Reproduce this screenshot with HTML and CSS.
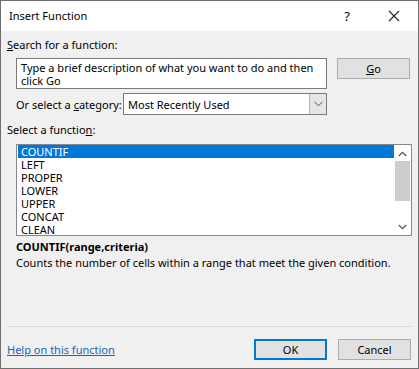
FILE: index.html
```html
<!DOCTYPE html>
<html lang="en">
<head>
  <meta charset="UTF-8">
  <title>Insert Function</title>
  <link rel="stylesheet" href="styles.css">
</head>
<body>

  <div class="dialog">
    <div class="titlebar">
      <span class="title">Insert Function</span>
      <span class="help">?</span>
      <span class="close">
        <svg width="12" height="12" viewBox="0 0 12 12"><path d="M1 1 L11 11 M11 1 L1 11" stroke="#222" stroke-width="1.1" fill="none"/></svg>
      </span>
    </div>

    <div class="content">
      <div class="label"><u>S</u>earch for a function:</div>

      <div class="search-row">
        <div class="search-box">Type a brief description of what you want to do and then click Go</div>
        <button class="btn"><u>G</u>o</button>
      </div>

      <div class="category-row">
        <span class="category-label">Or select a <u>c</u>ategory:</span>
        <div class="select">
          <span class="select-value">Most Recently Used</span>
          <span class="select-arrow">
            <svg width="9" height="6" viewBox="0 0 9 6"><path d="M0.5 0.8 L4.5 4.8 L8.5 0.8" stroke="#555" stroke-width="1" fill="none"/></svg>
          </span>
        </div>
      </div>

      <div class="label fn-label">Select a functio<u>n</u>:</div>

      <div class="listbox">
        <div class="list-items">
          <div class="item selected">COUNTIF</div>
          <div class="item">LEFT</div>
          <div class="item">PROPER</div>
          <div class="item">LOWER</div>
          <div class="item">UPPER</div>
          <div class="item">CONCAT</div>
          <div class="item">CLEAN</div>
        </div>
        <div class="scrollbar">
          <svg width="9" height="6" viewBox="0 0 9 6"><path d="M0.8 5 L4.5 1.3 L8.2 5" stroke="#555" stroke-width="1.3" fill="none"/></svg>
          <div class="thumb"></div>
          <svg width="9" height="6" viewBox="0 0 9 6"><path d="M0.8 1 L4.5 4.7 L8.2 1" stroke="#555" stroke-width="1.3" fill="none"/></svg>
        </div>
      </div>

      <div class="signature">COUNTIF(range,criteria)</div>
      <div class="description">Counts the number of cells within a range that meet the given condition.</div>

      <div class="separator"></div>

      <div class="footer">
        <a href="#" class="link">Help on this function</a>
        <div class="buttons">
          <button class="btn ok-btn">OK</button>
          <button class="btn">Cancel</button>
        </div>
      </div>
    </div>
  </div>

</body>
</html>
```

FILE: styles.css
```css
:root {
  --face: #f0f0f0;
  --border: #7a7a7a;
  --btn-bg: #e1e1e1;
  --btn-border: #adadad;
  --accent: #0078d7;
}

body {
  margin: 0;
  font-family: "Noto Sans", sans-serif;
  font-size: 11px;
  color: #000;
}

.dialog {
  width: 419px;
  height: 369px;
  box-sizing: border-box;
  border: 1px solid #6e6e6e;
  background: var(--face);
  display: flex;
  flex-direction: column;
}

.titlebar {
  height: 30px;
  background: #fff;
  display: flex;
  align-items: center;
  padding-left: 8px;
}

.title {
  flex: 1;
  margin-top: -1px;
}

.help {
  width: 44px;
  text-align: center;
  font-size: 13px;
  margin-right: 3px;
}

.close {
  width: 44px;
  display: flex;
  justify-content: center;
  margin-right: 2px;
}

.content {
  flex: 1;
  display: flex;
  flex-direction: column;
  padding: 6px 6px 8px 6px;
}

.label {
  line-height: 16px;
}

.search-row {
  display: flex;
  align-items: flex-start;
  gap: 10px;
  margin: 5px 0 0 9px;
}

.search-box {
  width: 311px;
  height: 31px;
  box-sizing: border-box;
  border: 1px solid var(--border);
  background: #fff;
  padding: 2px 4px;
  line-height: 13px;
}

.btn {
  width: 73px;
  height: 21px;
  box-sizing: border-box;
  border: 1px solid var(--btn-border);
  background: var(--btn-bg);
  font-family: inherit;
  font-size: 11px;
  padding: 0;
  color: #000;
}

.category-row {
  display: flex;
  align-items: center;
  width: 311px;
  margin: 4px 0 0 9px;
  height: 22px;
}

.category-label {
  white-space: nowrap;
}

.select {
  margin-left: auto;
  width: 204px;
  height: 22px;
  box-sizing: border-box;
  border: 1px solid var(--border);
  background: #fff;
  display: flex;
  align-items: center;
}

.select-value {
  flex: 1;
  padding-left: 4px;
}

.select-arrow {
  width: 16px;
  height: 20px;
  background: #e5e5e5;
  border-left: 1px solid #b5b5b5;
  display: flex;
  align-items: center;
  justify-content: center;
}

.fn-label {
  margin-top: 7px;
}

.listbox {
  margin: 6px 0 0 9px;
  width: 396px;
  height: 92px;
  box-sizing: border-box;
  border: 1px solid #828790;
  background: #fff;
  display: flex;
  overflow: hidden;
}

.list-items {
  flex: 1;
  padding: 0 0 0 1px;
}

.item {
  height: 13px;
  line-height: 13px;
  padding-left: 3px;
}

.item.selected {
  background: var(--accent);
  color: #fff;
}

.scrollbar {
  width: 17px;
  display: flex;
  flex-direction: column;
  align-items: center;
  padding-top: 6px;
  box-sizing: border-box;
}

.thumb {
  width: 15px;
  height: 40px;
  background: #cdcdcd;
  margin: 4px 0 auto 0;
}

.scrollbar svg:last-child {
  margin-bottom: 5px;
}

.signature {
  margin: 3px 0 0 9px;
  font-weight: bold;
  line-height: 16px;
}

.description {
  margin-left: 9px;
  line-height: 16px;
}

.separator {
  margin-top: auto;
  height: 1px;
  background: #dcdcdc;
}

.footer {
  display: flex;
  justify-content: space-between;
  align-items: center;
  margin-top: 12px;
}

.link {
  color: #1c63b7;
  text-decoration: underline;
}

.buttons {
  display: flex;
  gap: 11px;
  margin-right: 1px;
}

.ok-btn {
  border: 2px solid var(--accent);
}
```
